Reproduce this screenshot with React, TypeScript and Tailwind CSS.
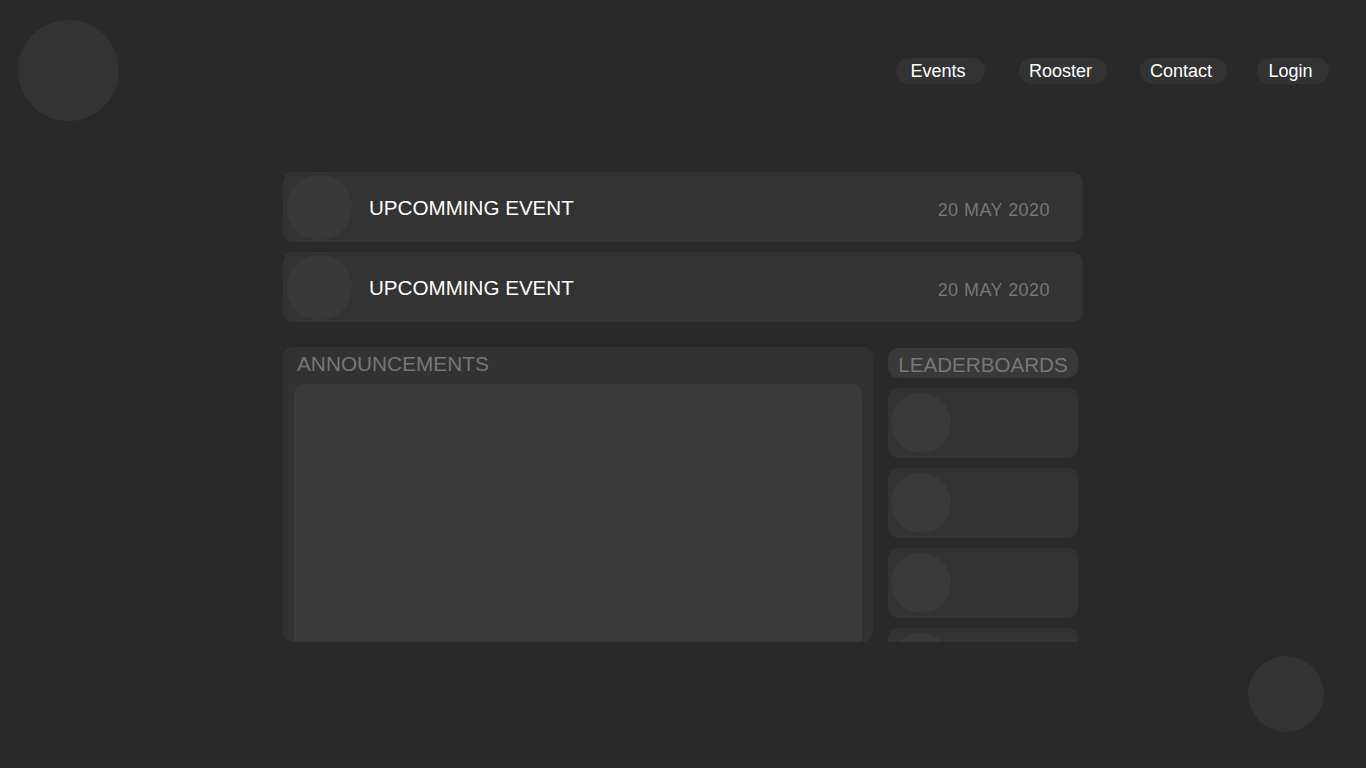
import React from "react";

const navItems = [
  { label: "Events", width: "w-[89px]", gap: "" },
  { label: "Rooster", width: "w-[88px]", gap: "ml-[34px]" },
  { label: "Contact", width: "w-[87px]", gap: "ml-[33px]" },
  { label: "Login", width: "w-[72px]", gap: "ml-[30px]" },
];

const events = [
  { title: "UPCOMMING EVENT", date: "20 MAY 2020" },
  { title: "UPCOMMING EVENT", date: "20 MAY 2020" },
];

function EventCard({ title, date }: { title: string; date: string }) {
  return (
    <div className="flex h-[70px] items-center rounded-[10px] bg-[#333333]">
      <div className="ml-[4px] h-[65px] w-[65px] shrink-0 rounded-full bg-[#393939]" />
      <span className="ml-[17px] mt-[1px] text-[20.6px] leading-[24px] text-white">{title}</span>
      <span className="ml-auto mr-[33px] mt-[5px] text-[18px] leading-[22px] tracking-[0.45px] text-[#777777]">
        {date}
      </span>
    </div>
  );
}

function LeaderRow() {
  return (
    <div className="flex h-[70px] shrink-0 items-center rounded-[10px] bg-[#333333]">
      <div className="ml-[3px] h-[60px] w-[60px] shrink-0 rounded-full bg-[#3a3a3a]" />
    </div>
  );
}

export default function App() {
  return (
    <div className="min-h-screen bg-[#292929] font-['Liberation_Sans',Arial,sans-serif]">
      {/* Header */}
      <header className="flex items-center justify-between pl-[18px] pr-[37px] pt-[20px]">
        <div className="h-[101px] w-[101px] rounded-full bg-[#333333]" />
        <nav className="flex items-center">
          {navItems.map((item) => (
            <a
              key={item.label}
              href="#"
              className={`${item.width} ${item.gap} flex h-[26px] items-center justify-center rounded-full bg-[#333333] pr-[5px] text-[18px] leading-[20px] text-white`}
            >
              {item.label}
            </a>
          ))}
        </nav>
      </header>

      {/* Main */}
      <main className="mx-auto mt-[51px] w-[800px]">
        <div className="flex flex-col gap-[10px]">
          {events.map((e, i) => (
            <EventCard key={i} title={e.title} date={e.date} />
          ))}
        </div>

        <div className="mt-[25px] flex h-[295px] gap-[15px]">
          {/* Announcements */}
          <section className="flex w-[590px] flex-col overflow-hidden rounded-[10px] bg-[#323232] px-[11px]">
            <h2 className="pl-[3px] pt-[5px] text-[20.8px] leading-[24px] text-[#777777]">ANNOUNCEMENTS</h2>
            <div className="mt-[8px] h-[400px] shrink-0 rounded-[10px] bg-[#3a3a3a]" />
          </section>

          {/* Leaderboards */}
          <section className="flex w-[190px] flex-col gap-[10px] overflow-hidden pt-[1px]">
            <div className="flex h-[30px] shrink-0 items-center justify-center rounded-[10px] bg-[#393939] pt-[3px] text-[20.6px] leading-[24px] text-[#777777]">
              LEADERBOARDS
            </div>
            <LeaderRow />
            <LeaderRow />
            <LeaderRow />
            <LeaderRow />
          </section>
        </div>
      </main>

      <div className="mt-[14px] flex justify-end pr-[42px]">
        <div className="h-[76px] w-[76px] rounded-full bg-[#333333]" />
      </div>
    </div>
  );
}
